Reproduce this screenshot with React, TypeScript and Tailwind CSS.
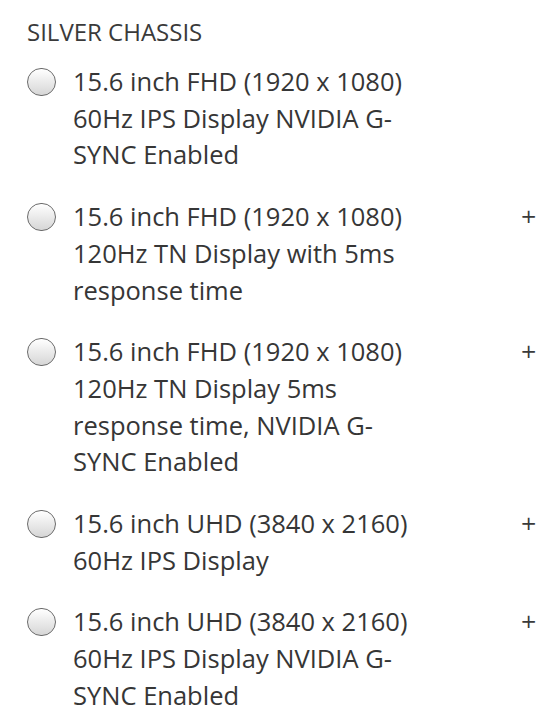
const options = [
  { label: '15.6 inch FHD (1920 x 1080) 60Hz IPS Display NVIDIA G-SYNC Enabled', extra: false },
  { label: '15.6 inch FHD (1920 x 1080) 120Hz TN Display with 5ms response time', extra: true },
  { label: '15.6 inch FHD (1920 x 1080) 120Hz TN Display 5ms response time, NVIDIA G-SYNC Enabled', extra: true },
  { label: '15.6 inch UHD (3840 x 2160) 60Hz IPS Display', extra: true },
  { label: '15.6 inch UHD (3840 x 2160) 60Hz IPS Display NVIDIA G-SYNC Enabled', extra: true },
];

function Radio() {
  return (
    <span className="mt-[5px] block w-[29px] h-[28px] shrink-0 rounded-full border-[1.5px] border-[#6b6b6b] bg-gradient-to-b from-white to-[#d6d6d6]" />
  );
}

export default function App() {
  return (
    <div className="bg-white min-h-[720px] text-[#363636] pl-[27px] pt-[16px]" style={{ fontFamily: '"Open Sans", sans-serif' }}>
      <h2 className="text-[24px] leading-[32px] text-[#3a3a3a] uppercase">Silver Chassis</h2>
      <div className="mt-[15px] flex flex-col gap-[25px]">
        {options.map((o, i) => (
          <label key={i} className="flex items-start">
            <Radio />
            <span className="ml-[17px] w-[348px] text-[25.5px] leading-[36.7px]">{o.label}</span>
            {o.extra && (
              <span
                className="ml-auto mr-[8px] text-[20px] leading-[36px] text-[#3a3a3a]"
                style={{ fontFamily: '"DejaVu Sans", sans-serif' }}
              >
                +
              </span>
            )}
          </label>
        ))}
      </div>
    </div>
  );
}
